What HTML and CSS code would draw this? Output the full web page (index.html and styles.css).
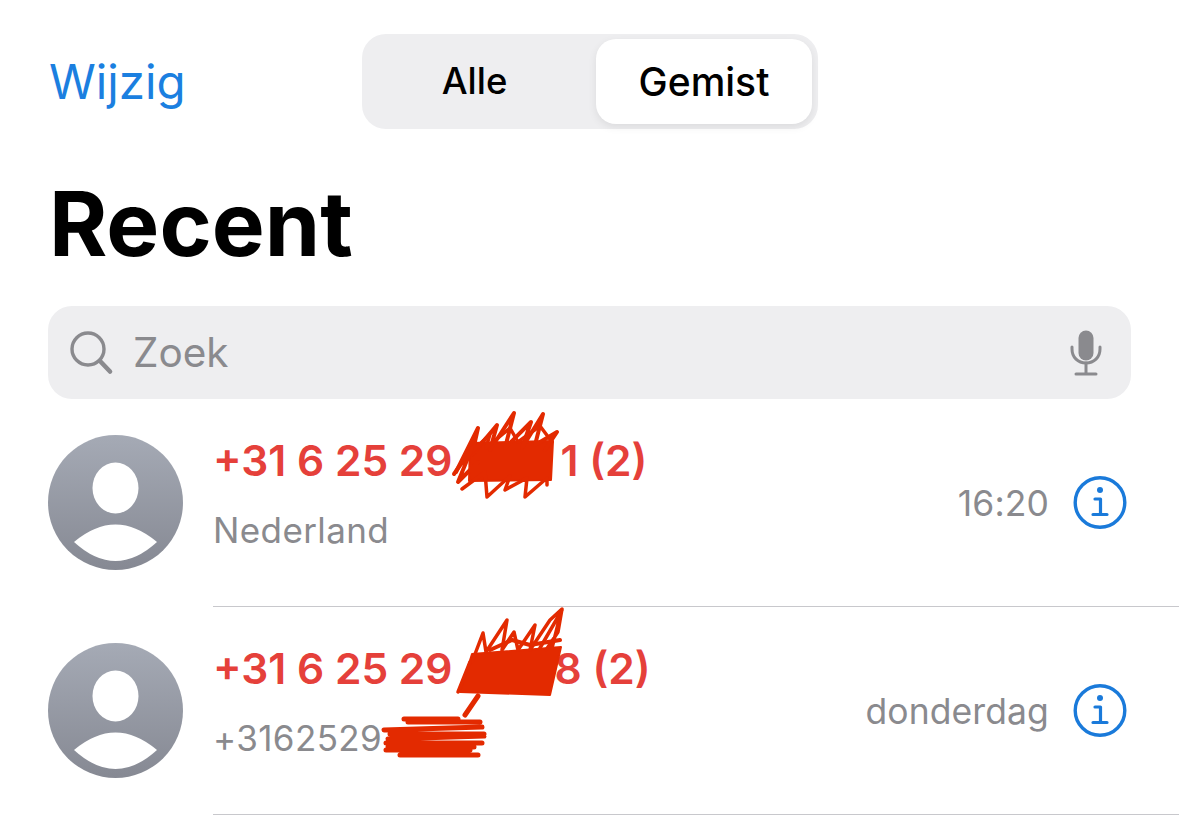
FILE: index.html
```html
<!DOCTYPE html>
<html lang="nl">
<head>
  <meta charset="UTF-8" />
  <meta name="viewport" content="width=device-width, initial-scale=1.0"/>
  <title>Recent</title>
  <link rel="stylesheet" href="styles.css">
</head>
<body>

  <div class="page">
    <div class="topbar">
      <a class="edit">Wijzig</a>
      <div class="segments">
        <div class="segment">Alle</div>
        <div class="segment active">Gemist</div>
      </div>
    </div>

    <h1 class="title">Recent</h1>

    <div class="search">
      <svg class="search-icon" width="44" height="44" viewBox="0 0 44 44" fill="none" stroke="#8a8a8e" stroke-linecap="round">
        <circle cx="18" cy="18" r="16" stroke-width="3.4"/>
        <path d="M30 30 L40 40.5" stroke-width="4.6"/>
      </svg>
      <span class="search-text">Zoek</span>
      <svg class="mic-icon" width="32" height="46" viewBox="0 0 32 46" fill="none" stroke="#8a8a8e" stroke-linecap="round">
        <rect x="8.5" y="0.5" width="15" height="30" rx="7.5" fill="#8a8a8e" stroke="none"/>
        <path d="M2 17 V19 C2 27.5 8 33 16 33 C24 33 30 27.5 30 19 V17" stroke-width="3"/>
        <path d="M16 33 V43.5 M6 44 H26" stroke-width="3"/>
      </svg>
    </div>

    <div class="row">
      <svg class="avatar" width="135" height="135" viewBox="0 0 135 135">
        <defs>
          <linearGradient id="avatarFill" x1="0" y1="0" x2="0" y2="1">
            <stop offset="0" stop-color="#a5aab5"/>
            <stop offset="1" stop-color="#868993"/>
          </linearGradient>
        </defs>
        <circle cx="67.5" cy="67.5" r="67.5" fill="url(#avatarFill)"/>
        <ellipse cx="67.5" cy="53" rx="23" ry="25.5" fill="#fff"/>
        <path d="M26 107 Q67.5 72 109 107 Q67.5 145 26 107 Z" fill="#fff"/>
      </svg>
      <div class="row-body">
        <div class="row-text">
          <div class="number">+31 6 25 29<span class="gap-one"></span>1 (2)</div>
          <div class="sub">Nederland</div>
        </div>
        <div class="row-meta">
          <span class="when">16:20</span>
          <svg class="info" width="56" height="56" viewBox="0 0 56 56" fill="none" stroke="#1a7ada">
            <circle cx="28" cy="27.5" r="24.8" stroke-width="3.4"/>
            <circle cx="28" cy="15" r="3" fill="#1a7ada" stroke="none"/>
            <path d="M23 24 H28.5 V39.5 M21 39.5 H35" stroke-width="3.2" stroke-linecap="round" stroke-linejoin="round"/>
          </svg>
        </div>
      </div>
      <svg class="scribble" width="1179" height="208" viewBox="0 399 1179 208" fill="none" stroke="#e32a00" stroke-linecap="round" stroke-linejoin="round">
        <path d="M470 443 L553 441 L551 480 L469 481 Z" fill="#e32a00" stroke-width="2"/>
        <path d="M456 472 L478 428 L472 455 L497 425 L490 450 L514 413 L505 448 L531 422 L522 448 L543 414 L535 445 L557 432 L545 450" stroke-width="4"/>
        <path d="M466 458 L490 434 L486 448 L510 428 L518 442 L540 426 L552 442" stroke-width="3.5"/>
        <path d="M454 474 L472 448 L458 482 L478 462" stroke-width="4"/>
        <path d="M462 489 L485 472 L487 497 L510 476 L505 490 L527 478 L525 497 L547 478 L547 485" stroke-width="3.5"/>
      </svg>
    </div>

    <div class="row">
      <svg class="avatar" width="135" height="135" viewBox="0 0 135 135">
        <circle cx="67.5" cy="67.5" r="67.5" fill="url(#avatarFill)"/>
        <ellipse cx="67.5" cy="53" rx="23" ry="25.5" fill="#fff"/>
        <path d="M26 107 Q67.5 72 109 107 Q67.5 145 26 107 Z" fill="#fff"/>
      </svg>
      <div class="row-body">
        <div class="row-text">
          <div class="number">+31 6 25 29<span class="gap-two"></span>8 (2)</div>
          <div class="sub">+3162529</div>
        </div>
        <div class="row-meta">
          <span class="when">donderdag</span>
          <svg class="info" width="56" height="56" viewBox="0 0 56 56" fill="none" stroke="#1a7ada">
            <circle cx="28" cy="27.5" r="24.8" stroke-width="3.4"/>
            <circle cx="28" cy="15" r="3" fill="#1a7ada" stroke="none"/>
            <path d="M23 24 H28.5 V39.5 M21 39.5 H35" stroke-width="3.2" stroke-linecap="round" stroke-linejoin="round"/>
          </svg>
        </div>
      </div>
      <svg class="scribble" width="1179" height="208" viewBox="0 607 1179 208" fill="none" stroke="#e32a00" stroke-linecap="round" stroke-linejoin="round">
        <path d="M472 654 L561 647 L550 695 L460 692 Z" fill="#e32a00" stroke-width="2"/>
        <path d="M472 662 L483 633 L486 652 L507 620 L502 650 L514 632 L518 650 L535 625 L530 650 L550 620 L562 609 L558 632 L546 650 M562 610 L540 648 M561 612 L552 648" stroke-width="3.5"/>
        <path d="M490 650 L512 640 L530 645 L560 640" stroke-width="4"/>
        <path d="M478 696 L465 715" stroke-width="5"/>
        <path d="M458 692 L470 662" stroke-width="3.5"/>
        <path d="M404 719 H458 M408 722 H480 M384 730 L482 727 M390 734 H484 M388 739 L484 736 M386 743 H482 M388 747 H474 M386 750 H470 M400 755 H478" stroke-width="5"/>
      </svg>
    </div>
  </div>

</body>
</html>
```

FILE: styles.css
```css
body {
  margin: 0;
  background-color: white;
  font-family: Inter, "Liberation Sans", sans-serif;
}

.page {
  height: 838px;
  overflow: hidden;
}

.topbar {
  display: grid;
  grid-template-columns: 362px 456px;
  padding-top: 34px;
}

.edit {
  padding-left: 49px;
  font-size: 47.5px;
  line-height: 95px;
  color: #1b7fe0;
}

.segments {
  display: flex;
  height: 95px;
  box-sizing: border-box;
  padding: 5px 6px 5px 0;
  background-color: #eeeef0;
  border-radius: 24px;
}

.segment {
  width: 225px;
  margin-right: 9px;
  text-align: center;
  font-size: 36.5px;
  font-weight: 500;
  line-height: 85px;
  color: black;
}

.segment.active {
  width: 216px;
  margin-right: 0;
  font-size: 39px;
  background-color: white;
  border-radius: 20px;
  box-shadow: 0 3px 8px rgba(0,0,0,0.08);
}

.title {
  margin: 45px 0 32px 49px;
  font-size: 89px;
  font-weight: 700;
  line-height: 100px;
  color: black;
}

.search {
  display: flex;
  align-items: center;
  height: 93px;
  margin: 0 48px;
  padding: 0 29px 0 22px;
  background-color: #eeeef0;
  border-radius: 24px;
}

.search-icon {
  margin-right: 19px;
}

.search-text {
  flex: 1;
  font-size: 40.5px;
  color: #8a8a8e;
}

.row {
  position: relative;
  display: flex;
  height: 208px;
  padding-left: 48px;
}

.avatar {
  flex-shrink: 0;
  margin: 36px 30px 0 0;
}

.row-body {
  flex: 1;
  display: flex;
  justify-content: space-between;
  border-bottom: 1px solid #c8c8cc;
  padding-right: 51px;
}

.row-text {
  padding: 38px 0 0;
}

.number {
  font-size: 42.5px;
  font-weight: 600;
  line-height: 48px;
  color: #e5403a;
}

.gap-one {
  display: inline-block;
  width: 108px;
}

.gap-two {
  display: inline-block;
  width: 102px;
}

.sub {
  margin-top: 25px;
  font-size: 35px;
  letter-spacing: 0.4px;
  line-height: 40px;
  color: #8a8a8e;
}

.row-meta {
  display: flex;
  align-items: center;
  align-self: flex-start;
  margin-top: 76px;
}

.when {
  margin-right: 23px;
  font-size: 35.5px;
  letter-spacing: 0.1px;
  color: #8a8a8e;
}

.scribble {
  position: absolute;
  left: 0;
  top: 0;
  pointer-events: none;
}
```
